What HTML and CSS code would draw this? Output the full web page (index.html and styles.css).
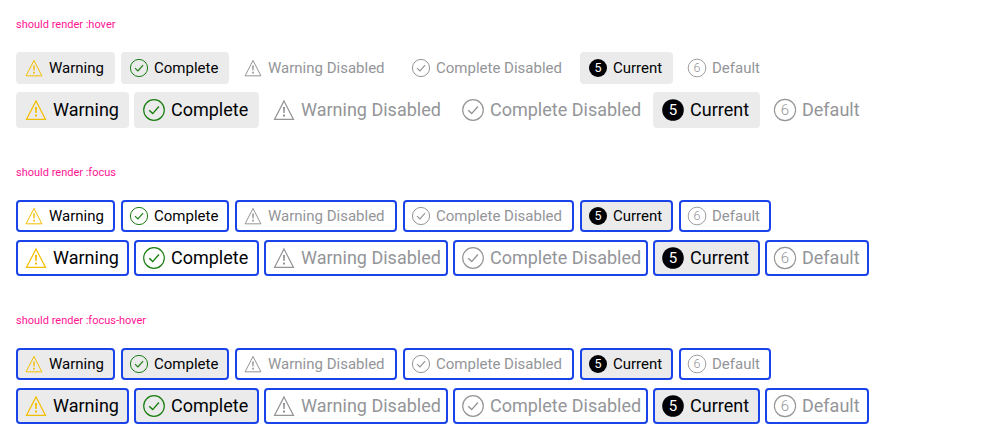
FILE: index.html
```
<!DOCTYPE html>
<html lang="en">
<head>
<meta charset="utf-8">
<title>Stepper states</title>
<link rel="stylesheet" href="styles.css">
</head>
<body>
<main class="groups"></main>
<script src="script.js"></script>
</body>
</html>
```

FILE: styles.css
```
* { box-sizing: border-box; }

body {
  margin: 0;
  padding: 16px;
  background: #fff;
  color: #010205;
  font-family: Roboto, "Liberation Sans", sans-serif;
}

.groups {
  display: flex;
  flex-direction: column;
  gap: 36px;
}

.title {
  margin: 0 0 18px;
  color: #ff1493;
  font-size: 11px;
  font-weight: 400;
  line-height: 18px;
}

.steps {
  display: grid;
  justify-content: start;
}

.small {
  grid-template-columns: 99px 108px 162px 171px 93px 92px;
  column-gap: 6px;
  margin-bottom: 8px;
  font-size: 15px;
}

.medium {
  grid-template-columns: 113px 125px 184px 195px 107px 104px;
  column-gap: 5px;
  font-size: 18px;
}

.step {
  display: flex;
  align-items: center;
  gap: 5px;
  padding: 4px 6px;
  border: 2px solid transparent;
  border-radius: 4px;
  background: transparent;
  color: inherit;
  font-family: inherit;
  font-size: inherit;
  line-height: 20px;
  white-space: nowrap;
}

.medium .step { line-height: 24px; }

.icon {
  flex: none;
  width: 20px;
  height: 20px;
}

.medium .icon {
  width: 24px;
  height: 24px;
}

.digit {
  fill: currentColor;
  font-size: 15px;
  font-weight: 400;
  text-anchor: middle;
}

.icon-default .digit { font-weight: 300; }
.icon-current .digit { fill: #fff; }
.icon-warning { color: #f3be00; }
.icon-complete { color: #197e10; }

.muted,
.muted .icon { color: #949598; }

.is-current,
.hover .step:not(.muted) { background: #ebebeb; }

.focus .step { border-color: #1a44ea; }
```

FILE: script.js
```
const groups = [
  { title: 'should render :hover', states: 'hover' },
  { title: 'should render :focus', states: 'focus' },
  { title: 'should render :focus-hover', states: 'focus hover' },
];

const icons = {
  warning: `
    <path d="M12 2.9 21.5 21.4H2.5z" fill="none" stroke="currentColor" stroke-width="1.2"/>
    <path d="M11 9h2l-.3 6h-1.4zM11 16.5h2v2h-2z" fill="currentColor"/>`,
  complete: `
    <circle cx="12" cy="12" r="10.3" fill="none" stroke="currentColor" stroke-width="1.2"/>
    <path d="M7.2 12.2 10.7 15.6 16.9 8.5" fill="none" stroke="currentColor" stroke-width="1.4"/>`,
  current: `
    <circle cx="12" cy="12" r="10.8" fill="currentColor"/>
    <text class="digit" x="12" y="17.3">5</text>`,
  default: `
    <circle cx="12" cy="12" r="10.6" fill="none" stroke="currentColor" stroke-width="1.1"/>
    <text class="digit" x="12" y="17.3">6</text>`,
};

const steps = [
  { label: 'Warning', icon: 'warning' },
  { label: 'Complete', icon: 'complete' },
  { label: 'Warning Disabled', icon: 'warning', state: 'muted', disabled: true },
  { label: 'Complete Disabled', icon: 'complete', state: 'muted', disabled: true },
  { label: 'Current', icon: 'current', state: 'is-current' },
  { label: 'Default', icon: 'default', state: 'muted' },
];

const renderStep = ({ label, icon, state = '', disabled }) => `
  <button type="button" class="step ${state}"${disabled ? ' disabled' : ''}>
    <svg class="icon icon-${icon}" viewBox="0 0 24 24" aria-hidden="true">${icons[icon]}</svg>
    <span>${label}</span>
  </button>`;

const renderRow = (size) => `<div class="steps ${size}">${steps.map(renderStep).join('')}</div>`;

document.querySelector('.groups').innerHTML = groups.map(({ title, states }) => `
  <section class="${states}">
    <h2 class="title">${title}</h2>
    ${renderRow('small')}
    ${renderRow('medium')}
  </section>`).join('');
```
